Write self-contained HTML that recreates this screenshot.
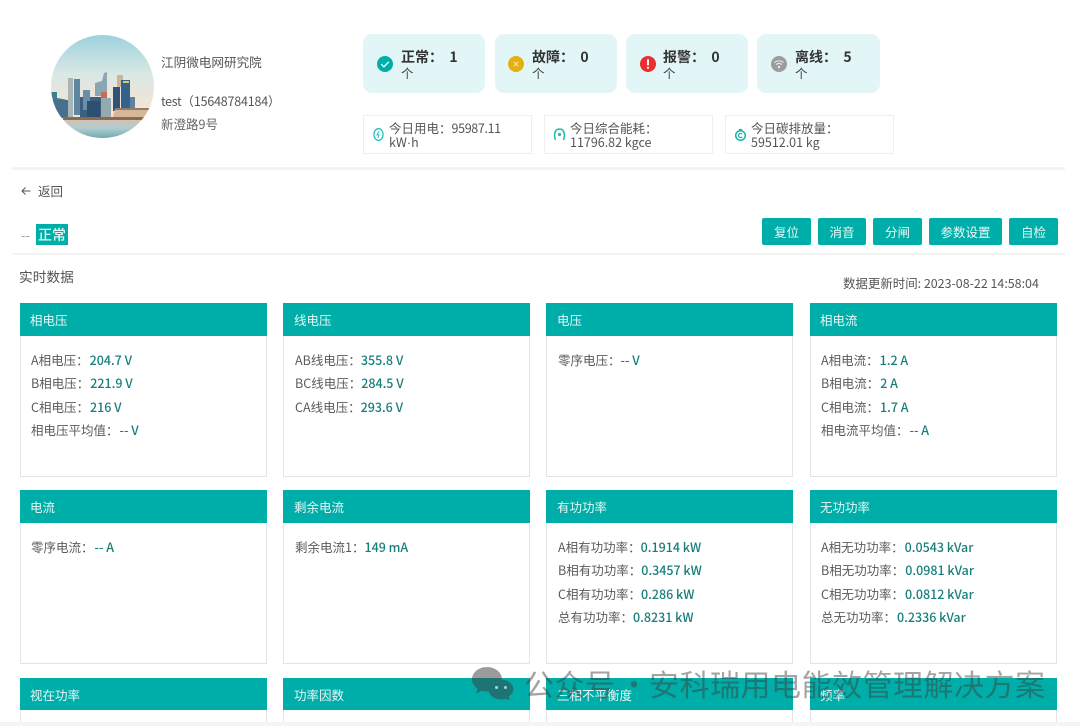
<!DOCTYPE html>
<html lang="zh"><head><meta charset="utf-8"><title>实时数据</title>
<style>
html,body{margin:0;padding:0;background:#fff;width:1080px;height:726px;overflow:hidden}
#w{position:absolute;left:0;top:0;width:1080px;height:726px;overflow:hidden;font-family:"Noto Sans CJK SC","Liberation Sans",sans-serif;font-size:12px;color:#555}
.a{position:absolute;white-space:nowrap}
.hr{position:absolute;background:#f4f4f4}
.st{position:absolute;top:34px;width:122px;height:59px;background:#e3f6f7;border-radius:9px}
.st svg{position:absolute;left:14px;top:22px}
.st b{position:absolute;left:38px;top:13px;font-size:14px;line-height:21px;color:#333;white-space:pre;font-weight:700}
.st i{position:absolute;left:38px;top:31px;font-style:normal;font-size:12.5px;line-height:16px;color:#444}
.en{position:absolute;top:115px;height:37px;background:#fff;border:1px solid #eee}
.en svg{position:absolute;left:8px;top:11px}
.en div{position:absolute;left:25px;top:5px;font-size:12.5px;line-height:14px;color:#555;white-space:nowrap}
.n{letter-spacing:-.35px}
.btn{position:absolute;top:218px;height:27px;background:#00aea9;color:#e9f8f7;border-radius:2px;font-size:12.5px;line-height:28px;text-align:center}
.card{position:absolute;width:245px;height:173px;border:1px solid #e4e4e4;border-top:0;background:#fff}
.card h4{margin:0 -1px;height:33px;background:#00aea9;color:#e6f7f6;font-weight:400;font-size:12.5px;line-height:34px;padding-left:10px}
.card.s{height:44px}
.card.s h4{height:32px;line-height:33px}
.card.m h4{padding-left:11px}
.card p{margin:0;position:absolute;left:10px;font-size:12.5px;line-height:16px;color:#5a5a5a;white-space:nowrap}
.card.m p{left:11px}
.card p span{color:#177e7c;font-weight:500;margin-left:1px}
.card.m p span{margin-left:0}
.wm{position:absolute;top:664px;font-size:30px;line-height:38px;color:rgba(60,60,60,.47);letter-spacing:.5px;white-space:nowrap}
</style></head><body><div id="w">

<svg class="a" style="left:51px;top:35px" width="103" height="103" viewBox="0 0 103 103">
<defs>
<clipPath id="c"><circle cx="51.5" cy="51.5" r="51.500"/></clipPath>
<linearGradient id="sky" x1="0" y1="0" x2="0" y2="1"><stop offset="0" stop-color="#9ed0de"/><stop offset=".38" stop-color="#d9e8e4"/><stop offset=".7" stop-color="#f3e4d6"/></linearGradient>
<linearGradient id="wat" x1="0" y1="0" x2="0" y2="1"><stop offset="0" stop-color="#cfc2b4"/><stop offset=".45" stop-color="#b3ccd0"/><stop offset="1" stop-color="#6fa9b0"/></linearGradient>
</defs>
<g clip-path="url(#c)">
<rect width="103" height="103" fill="url(#sky)"/>
<path d="M0 57h6v6l6 1 4 1V82H0z" fill="#3d7f90"/>
<rect x="0" y="65" width="18" height="18" fill="#46708c"/>
<rect x="17" y="43" width="5" height="39" fill="#a8b5b4"/>
<rect x="23" y="44" width="6" height="36" fill="#5f86a0"/>
<rect x="29" y="62" width="22" height="20" fill="#3c5f80"/>
<rect x="32" y="55" width="7" height="20" fill="#6a8ea6"/>
<rect x="36" y="66" width="13" height="16" fill="#2e4f72"/>
<path d="M44 48l7-2 2-8 3-1v24H44z" fill="#8aa6b4"/>
<rect x="50" y="57" width="6" height="6" fill="#c96a55"/>
<rect x="50" y="63" width="10" height="19" fill="#94aab0"/>
<rect x="62" y="52" width="7" height="24" fill="#2f5478"/>
<rect x="66" y="40" width="6" height="12" fill="#c9b49c"/>
<rect x="70" y="45" width="9" height="30" fill="#35628a"/>
<rect x="72" y="46" width="6" height="2" fill="#e0c860"/>
<rect x="79" y="62" width="5" height="12" fill="#5c84a0"/>
<path d="M64 74l34-1v9H62z" fill="#d8b798"/>
<rect x="64" y="73" width="34" height="2" fill="#8f7a6c"/>
<rect x="12" y="82" width="86" height="3" fill="#8b6a50"/>
<rect y="85" width="103" height="18" fill="url(#wat)"/>
</g></svg>

<div class="a" style="left:161px;top:53px;font-size:12.6px;line-height:17px;color:#555">江阴微电网研究院</div>
<div class="a" style="left:161px;top:92px;font-size:12.5px;line-height:17px;color:#555"><span class="n">test</span>（<span style="letter-spacing:-.2px">15648784184</span>）</div>
<div class="a" style="left:161px;top:115px;font-size:12.5px;line-height:17px;color:#666">新澄路9号</div>

<div class="st" style="left:363px">
<svg width="16" height="16" viewBox="0 0 16 16"><circle cx="8" cy="8" r="8" fill="#00aea9"/><path d="M4.200 8.200l2.700 2.600 4.900-5" fill="none" stroke="#fff" stroke-width="1.300"/></svg>
<b>正常：  1</b><i>个</i></div>
<div class="st" style="left:495px">
<svg style="left:13px" width="16" height="16" viewBox="0 0 16 16"><circle cx="8" cy="8" r="8" fill="#e3b011"/><path d="M5.800 5.800l4.400 4.400M10.200 5.800l-4.400 4.400" stroke="#fbe9a8" stroke-width="1"/></svg>
<b style="left:37px">故障：  0</b><i style="left:37px">个</i></div>
<div class="st" style="left:626px">
<svg width="16" height="16" viewBox="0 0 16 16"><circle cx="8" cy="8" r="8" fill="#ea2f2f"/><path d="M8 3.400v6" stroke="#fff" stroke-width="1.900"/><circle cx="8" cy="11.800" r="1.100" fill="#fff"/></svg>
<b style="left:37px">报警：  0</b><i style="left:37px">个</i></div>
<div class="st" style="left:757px;width:123px">
<svg width="16" height="16" viewBox="0 0 16 16"><circle cx="8" cy="8" r="8" fill="#9c9c9c"/><path d="M3.400 6.600c2.600-2.300 6.600-2.300 9.200 0M5 8.600c1.700-1.500 4.300-1.500 6 0" fill="none" stroke="#eee" stroke-width="1.100"/><circle cx="8" cy="11" r="1.200" fill="#eee"/></svg>
<b>离线：  5</b><i>个</i></div>

<div class="en" style="left:363px;width:167px">
<svg width="13" height="15" viewBox="0 0 13 15"><ellipse cx="6.500" cy="7.500" rx="4.600" ry="5.800" fill="none" stroke="#1fc0bb" stroke-width="1.300"/><path d="M7.300 4.200L5 8h2l-1.200 3" fill="none" stroke="#1fc0bb" stroke-width="1"/></svg>
<div>今日用电：<span class="n">95987.11</span><br>kW<span style="font-family:'Liberation Sans',sans-serif">·</span>h</div></div>
<div class="en" style="left:544px;width:167px">
<svg width="13" height="15" viewBox="0 0 13 15"><path d="M2.500 13C.6 8 1.600 2 6.500 2s5.900 6 4 11" fill="none" stroke="#2ab8b0" stroke-width="1.600"/><circle cx="6.500" cy="7.500" r="1.600" fill="#2ab8b0"/></svg>
<div>今日综合能耗：<br>11796.82 kgce</div></div>
<div class="en" style="left:725px;width:167px">
<svg width="13" height="15" viewBox="0 0 13 15"><circle cx="6.500" cy="8.500" r="4.800" fill="none" stroke="#12b5ad" stroke-width="1.500"/><path d="M8.200 7.200a2.100 2.100 0 1 0 0 2.600" fill="none" stroke="#12b5ad" stroke-width="1.100"/><path d="M5 2.600h3" stroke="#12b5ad" stroke-width="1.400"/></svg>
<div>今日碳排放量：<br>59512.01 kg</div></div>

<div class="hr" style="left:12px;top:167px;width:1053px;height:3px"></div>

<svg class="a" style="left:21px;top:186px" width="10" height="10" viewBox="0 0 10 10"><path d="M9.500 5H1M4.500 1.500L1 5l3.500 3.500" fill="none" stroke="#555" stroke-width="1"/></svg>
<div class="a" style="left:38px;top:182px;font-size:12.5px;line-height:18px;color:#555">返回</div>

<div class="a" style="left:21px;top:226px;font-size:13px;line-height:18px;color:#999">--</div>
<div class="a" style="left:36px;top:224px;width:32px;height:21px;background:#00aea9;color:#e9faf8;font-size:14px;line-height:22px;text-align:center;font-weight:500">正常</div>

<div class="btn" style="left:762px;width:49px">复位</div>
<div class="btn" style="left:818px;width:48px">消音</div>
<div class="btn" style="left:873px;width:49px">分闸</div>
<div class="btn" style="left:929px;width:73px">参数设置</div>
<div class="btn" style="left:1009px;width:49px">自检</div>

<div class="hr" style="left:12px;top:253px;width:1053px;height:2px"></div>

<div class="a" style="left:19px;top:266px;font-size:13.7px;line-height:20px;color:#555">实时数据</div>
<div class="a" style="left:843px;top:275px;font-size:12.45px;line-height:17px;color:#555">数据更新时间: 2023-08-22 14:58:04</div>

<div class="card" style="left:20px;top:303px"><h4>相电压</h4>
<p style="top:49px">A相电压：<span>204.7 V</span></p><p style="top:72px">B相电压：<span>221.9 V</span></p><p style="top:96px">C相电压：<span>216 V</span></p><p style="top:119px">相电压平均值：<span>-- V</span></p></div>
<div class="card m" style="left:283px;top:303px"><h4>线电压</h4>
<p style="top:49px">AB线电压：<span>355.8 V</span></p><p style="top:72px">BC线电压：<span>284.5 V</span></p><p style="top:96px">CA线电压：<span>293.6 V</span></p></div>
<div class="card m" style="left:546px;top:303px"><h4>电压</h4>
<p style="top:49px">零序电压：<span>-- V</span></p></div>
<div class="card" style="left:810px;top:303px"><h4>相电流</h4>
<p style="top:49px">A相电流：<span>1.2 A</span></p><p style="top:72px">B相电流：<span>2 A</span></p><p style="top:96px">C相电流：<span>1.7 A</span></p><p style="top:119px">相电流平均值：<span>-- A</span></p></div>

<div class="card" style="left:20px;top:490px"><h4>电流</h4>
<p style="top:49px">零序电流：<span>-- A</span></p></div>
<div class="card m" style="left:283px;top:490px"><h4>剩余电流</h4>
<p style="top:49px">剩余电流1：<span>149 mA</span></p></div>
<div class="card m" style="left:546px;top:490px"><h4>有功功率</h4>
<p style="top:49px">A相有功功率：<span>0.1914 kW</span></p><p style="top:72px">B相有功功率：<span>0.3457 kW</span></p><p style="top:96px">C相有功功率：<span>0.286 kW</span></p><p style="top:119px">总有功功率：<span>0.8231 kW</span></p></div>
<div class="card" style="left:810px;top:490px"><h4>无功功率</h4>
<p style="top:49px">A相无功功率：<span>0.0543 kVar</span></p><p style="top:72px">B相无功功率：<span>0.0981 kVar</span></p><p style="top:96px">C相无功功率：<span>0.0812 kVar</span></p><p style="top:119px">总无功功率：<span>0.2336 kVar</span></p></div>

<div class="card s" style="left:20px;top:678px"><h4>视在功率</h4></div>
<div class="card s m" style="left:283px;top:678px"><h4>功率因数</h4></div>
<div class="card s m" style="left:546px;top:678px"><h4>三相不平衡度</h4></div>
<div class="card s" style="left:810px;top:678px"><h4>频率</h4></div>

<div class="a" style="left:0;top:722px;width:1080px;height:4px;background:#f4f4f4"></div>

<svg class="a" style="left:472px;top:667px" width="42" height="33" viewBox="0 0 42 33">
<g opacity=".5" fill="#3c3c3c">
<path d="M15 0C6.700 0 0 5.500 0 12.300c0 3.900 2.200 7.300 5.600 9.600L4.300 26.500l5.300-2.800c1.700.5 3.500.8 5.400.8 8.300 0 15-5.500 15-12.200S23.300 0 15 0z"/>
<path d="M29 12.500c-7 0-12.500 4.500-12.500 10s5.500 10 12.500 10c1.500 0 3-.2 4.300-.6l4.400 1.100-1-3.800c3-1.800 4.800-4.200 4.800-6.700 0-5.500-5.500-10-12.500-10z"/>
</g>
<circle cx="24.500" cy="20.500" r="1.500" fill="#9fd8d4"/><circle cx="33.500" cy="20.500" r="1.500" fill="#9fd8d4"/>
</svg>
<div class="wm" style="left:524px">公众号</div>
<div class="wm" style="left:619px">·</div>
<div class="wm" style="left:649px">安科瑞用电能效管理解决方案</div>

</div></body></html>
